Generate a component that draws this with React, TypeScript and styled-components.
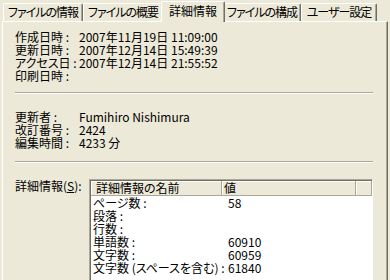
import React from "react";
import styled, { createGlobalStyle } from "styled-components";

const GlobalStyle = createGlobalStyle`
    body {
        margin: 0;
        background: #ece9d8;
        font-family: "Noto Sans CJK JP", "Liberation Sans", sans-serif;
        font-size: 12px;
        color: #000;
    }
`;

const tabs = [
    { label: "ファイルの情報", width: 80, tight: true },
    { label: "ファイルの概要", width: 80, tight: true },
    { label: "詳細情報", width: 64, active: true },
    { label: "ファイルの構成", width: 78, tight: true },
    { label: "ユーザー設定", width: 76, tight: true },
];

const dates = [
    ["作成日時 :", "2007年11月19日 11:09:00"],
    ["更新日時 :", "2007年12月14日 15:49:39"],
    ["アクセス日 :", "2007年12月14日 21:55:52"],
    ["印刷日時 :", ""],
];

const editInfo = [
    ["更新者 :", "Fumihiro Nishimura"],
    ["改訂番号 :", "2424"],
    ["編集時間 :", "4233 分"],
];

const details = [
    ["ページ数 :", "58"],
    ["段落 :", ""],
    ["行数 :", ""],
    ["単語数 :", "60910"],
    ["文字数 :", "60959"],
    ["文字数 (スペースを含む) :", "61840"],
];

export default function App() {
    return (
        <Window>
            <GlobalStyle />
            <TabStrip>
                {tabs.map((t) => (
                    <Tab
                        key={t.label}
                        $width={t.width}
                        $active={!!t.active}
                        $tight={!!t.tight}
                    >
                        {t.label}
                    </Tab>
                ))}
            </TabStrip>
            <Panel>
                <InfoGrid>
                    {dates.map(([k, v]) => (
                        <React.Fragment key={k}>
                            <Label>{k}</Label>
                            <Value>{v}</Value>
                        </React.Fragment>
                    ))}
                </InfoGrid>
                <Separator $top={10} />
                <InfoGrid $top={16}>
                    {editInfo.map(([k, v]) => (
                        <React.Fragment key={k}>
                            <Label>{k}</Label>
                            <Value>{v}</Value>
                        </React.Fragment>
                    ))}
                </InfoGrid>
                <Separator $top={12} />
                <DetailSection>
                    <DetailLabel>
                        詳細情報(<u>S</u>):
                    </DetailLabel>
                    <ListBox>
                        <ListHeader>
                            <HeaderCell $pad={5}>詳細情報の名前</HeaderCell>
                            <HeaderCell $pad={2}>値</HeaderCell>
                            <HeaderCell $pad={0} />
                        </ListHeader>
                        {details.map(([k, v]) => (
                            <ListRow key={k}>
                                <NameCell>{k}</NameCell>
                                <ValueCell>{v}</ValueCell>
                            </ListRow>
                        ))}
                    </ListBox>
                </DetailSection>
            </Panel>
        </Window>
    );
}

const Window = styled.div`
    width: 390px;
    height: 280px;
    overflow: hidden;
    background: #ece9d8;
    font-feature-settings: "palt";
`;

const TabStrip = styled.div`
    position: relative;
    z-index: 1;
    display: flex;
    align-items: flex-end;
    height: 22px;
    margin-bottom: -1px;
    padding-left: 3px;
`;

const Tab = styled.div<{ $width: number; $active: boolean; $tight: boolean }>`
    box-sizing: border-box;
    width: ${(p) => p.$width}px;
    height: ${(p) => (p.$active ? 21 : 18)}px;
    margin: 0 ${(p) => (p.$active ? -2 : 0)}px ${(p) => (p.$active ? 0 : 1)}px;
    z-index: ${(p) => (p.$active ? 2 : 0)};
    background: #ece9d8;
    border-top: 1px solid #fff;
    border-left: 1px solid #fff;
    border-right: 1px solid #716f64;
    box-shadow: inset -1px 0 #aca899;
    border-radius: 2px 2px 0 0;
    text-align: center;
    letter-spacing: ${(p) => (p.$tight ? -1 : 0)}px;
    line-height: ${(p) => (p.$active ? 17 : 16)}px;
    white-space: nowrap;
    overflow: hidden;
`;

const Panel = styled.div`
    box-sizing: border-box;
    margin-left: 2px;
    width: 386px;
    height: 300px;
    padding: 8px 14px 0 12px;
    border-top: 1px solid #fff;
    border-left: 1px solid #fff;
    border-right: 1px solid #716f64;
    box-shadow: inset -1px 0 #aca899;
`;

const InfoGrid = styled.div<{ $top?: number }>`
    display: grid;
    grid-template-columns: 64px 1fr;
    line-height: 13px;
    margin-top: ${(p) => p.$top ?? 0}px;
`;

const Label = styled.div`
    white-space: nowrap;
`;

const Value = styled.div`
    white-space: nowrap;
    min-height: 13px;
`;

const Separator = styled.div<{ $top: number }>`
    margin-top: ${(p) => p.$top}px;
    border-top: 1px solid #aca899;
    border-bottom: 1px solid #fff;
`;

const DetailSection = styled.div`
    display: flex;
    align-items: flex-start;
    margin-top: 16px;
`;

const DetailLabel = styled.div`
    width: 74px;
    line-height: 13px;
    white-space: nowrap;
`;

const ListBox = styled.div`
    box-sizing: border-box;
    width: 284px;
    height: 120px;
    background: #fff;
    border-top: 1px solid #aca899;
    border-left: 1px solid #aca899;
    border-right: 1px solid #fff;
    box-shadow: inset 1px 1px #716f64;
    padding: 1px 0 0 1px;
    line-height: 13px;
`;

const ListHeader = styled.div`
    display: grid;
    grid-template-columns: 131px 134px 1fr;
    height: 15px;
`;

const HeaderCell = styled.div<{ $pad: number }>`
    box-sizing: border-box;
    height: 15px;
    padding-left: ${(p) => p.$pad}px;
    background: #ece9d8;
    border-right: 1px solid #aca899;
    border-bottom: 1px solid #aca899;
    box-shadow: inset 1px 1px #fff;
    line-height: 14px;
    white-space: nowrap;
`;

const ListRow = styled.div`
    display: grid;
    grid-template-columns: 131px 1fr;
    height: 13px;
`;

const NameCell = styled.div`
    padding-left: 2px;
    white-space: nowrap;
`;

const ValueCell = styled.div`
    padding-left: 6px;
    white-space: nowrap;
`;
